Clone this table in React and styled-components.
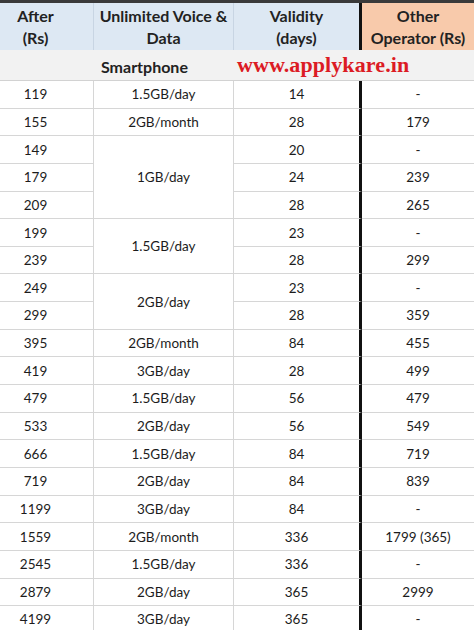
import React from "react";
import styled, { createGlobalStyle } from "styled-components";

const Global = createGlobalStyle`
  html, body { margin: 0; padding: 0; background: #ffffff; }
  body { overflow: hidden; }
`;

const COLS = "94px 140px 128px 112px";
const ROW_H = 27.65;

const Sheet = styled.div`
  width: 474px;
  border-top: 3px solid #3a3a3a;
  font-family: Lato, "Open Sans", sans-serif;
  color: #1c1c1c;
`;

const HeaderRow = styled.div`
  display: grid;
  grid-template-columns: ${COLS};
  height: 47px;
`;

const HeadCell = styled.div`
  display: flex;
  align-items: center;
  justify-content: center;
  text-align: center;
  font-weight: 700;
  font-size: 16px;
  line-height: 22px;
  color: #222;
  background: ${(p) => (p.$accent ? "#f8caab" : "#dde8f3")};
  border-right: ${(p) => p.$divider || "1px solid #c8d5e3"};
  padding-right: ${(p) => p.$pr || 0}px;
  box-sizing: border-box;
  padding-top: 1px;
`;

const SectionRow = styled.div`
  display: flex;
  align-items: center;
  height: 31px;
  background: #f2f2f2;
  border-bottom: 1px solid #d2d2d2;
  padding-left: 101px;
  box-sizing: border-box;
  gap: 49px;
`;

const SectionLabel = styled.span`
  font-weight: 700;
  font-size: 16px;
  color: #222;
  padding-top: 2px;
`;

const Watermark = styled.span`
  font-family: "Liberation Serif", "Times New Roman", serif;
  font-weight: 700;
  font-size: 22px;
  color: #dc1b24;
  letter-spacing: 0.1px;
  padding-bottom: 1px;
`;

const Body = styled.div`
  display: grid;
  grid-template-columns: ${COLS};
  grid-auto-rows: ${ROW_H}px;
`;

const Cell = styled.div`
  grid-column: ${(p) => p.$col};
  grid-row: span ${(p) => p.$span || 1};
  display: flex;
  align-items: center;
  justify-content: center;
  font-size: 13.5px;
  border-bottom: 1px solid #d6d6d6;
  border-right: ${(p) => p.$divider || "none"};
  padding-right: ${(p) => p.$pr || 0}px;
  box-sizing: border-box;
`;

const rows = [
  { p: "119", d: "1.5GB/day", v: "14", o: "-" },
  { p: "155", d: "2GB/month", v: "28", o: "179" },
  { p: "149", d: "1GB/day", span: 3, v: "20", o: "-" },
  { p: "179", v: "24", o: "239" },
  { p: "209", v: "28", o: "265" },
  { p: "199", d: "1.5GB/day", span: 2, v: "23", o: "-" },
  { p: "239", v: "28", o: "299" },
  { p: "249", d: "2GB/day", span: 2, v: "23", o: "-" },
  { p: "299", v: "28", o: "359" },
  { p: "395", d: "2GB/month", v: "84", o: "455" },
  { p: "419", d: "3GB/day", v: "28", o: "499" },
  { p: "479", d: "1.5GB/day", v: "56", o: "479" },
  { p: "533", d: "2GB/day", v: "56", o: "549" },
  { p: "666", d: "1.5GB/day", v: "84", o: "719" },
  { p: "719", d: "2GB/day", v: "84", o: "839" },
  { p: "1199", d: "3GB/day", v: "84", o: "-" },
  { p: "1559", d: "2GB/month", v: "336", o: "1799 (365)" },
  { p: "2545", d: "1.5GB/day", v: "336", o: "-" },
  { p: "2879", d: "2GB/day", v: "365", o: "2999" },
  { p: "4199", d: "3GB/day", v: "365", o: "-" },
];

const LIGHT = "1px solid #d6d6d6";
const THICK = "3px solid #111111";

export default function App() {
  return (
    <>
      <Global />
      <Sheet>
        <HeaderRow>
          <HeadCell $pr={22}>After<br />(Rs)</HeadCell>
          <HeadCell>Unlimited Voice &amp;<br />Data</HeadCell>
          <HeadCell $divider={THICK}>Validity<br />(days)</HeadCell>
          <HeadCell $accent $divider="none">Other<br />Operator (Rs)</HeadCell>
        </HeaderRow>
        <SectionRow>
          <SectionLabel>Smartphone</SectionLabel>
          <Watermark>www.applykare.in</Watermark>
        </SectionRow>
        <Body>
          {rows.map((r) => (
            <React.Fragment key={r.p}>
              <Cell $col={1} $divider={LIGHT} $pr={22}>{r.p}</Cell>
              {r.d && (
                <Cell $col={2} $span={r.span} $divider={LIGHT}>{r.d}</Cell>
              )}
              <Cell $col={3} $divider={THICK}>{r.v}</Cell>
              <Cell $col={4}>{r.o}</Cell>
            </React.Fragment>
          ))}
        </Body>
      </Sheet>
    </>
  );
}
